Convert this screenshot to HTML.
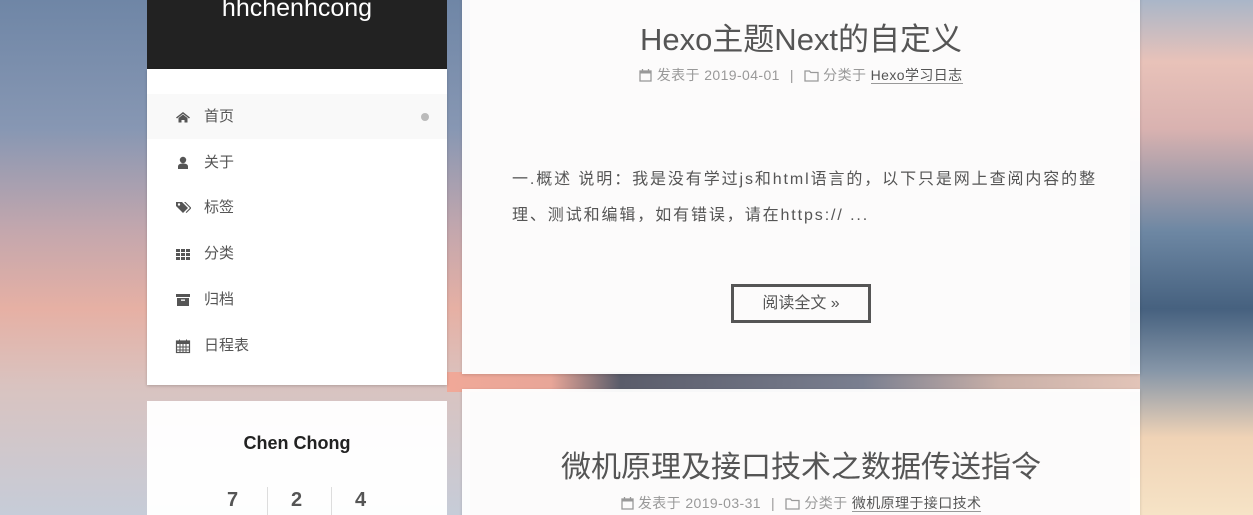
<!DOCTYPE html>
<html><head><meta charset="utf-8"><style>
*{margin:0;padding:0;box-sizing:border-box}
html,body{width:1253px;height:515px;overflow:hidden}
body{position:relative;font-family:"Liberation Sans","Noto Sans CJK SC",sans-serif;background:#b9a9b0}
.bgl{position:absolute;left:0;top:0;width:470px;height:515px;background:linear-gradient(180deg,#6f86a6 0%,#8797b3 25%,#c4a7ad 45%,#e6b0a4 60%,#d9c3c0 75%,#c6ccd8 100%)}
.bgr{position:absolute;left:1130px;top:0;width:123px;height:515px;background:linear-gradient(180deg,#a9b6c8 0%,#e8c2b9 12%,#d9b2b0 25%,#6d87a3 45%,#46617f 60%,#8696a8 72%,#f0d3b6 85%,#f6e3c6 100%)}
.bgm{position:absolute;left:447px;top:372px;width:693px;height:20px;background:linear-gradient(90deg,#f0a898 0%,#e8a698 15%,#5a5c6a 25%,#7a7f90 60%,#c9b0a8 80%,#e2c4b8 100%)}
.header{position:absolute;left:147px;top:0;width:300px;height:69px;background:#222;color:#fff;text-align:center;font-size:25px}
.menu{position:absolute;left:147px;top:69px;width:300px;height:316px;background:#fff;box-shadow:0 1px 3px rgba(0,0,0,.2)}
.item{position:absolute;left:0;width:300px;height:45px;font-size:15px;color:#555;line-height:45px}
.item .ic{position:absolute;left:28px;top:15px;width:16px;height:16px}
.item .t{position:absolute;left:57px}
.side2{position:absolute;left:147px;top:401px;width:300px;height:114px;background:rgba(255,255,255,.97)}
.card{position:absolute;left:462px;width:678px;background:rgba(255,255,255,.95);box-shadow:0 1px 3px rgba(0,0,0,.15);color:#555}
h1{font-weight:normal;font-size:31px;text-align:center;position:absolute;left:0;width:100%;color:#555}
.meta{position:absolute;left:0;width:100%;text-align:center;font-size:14px;color:#999;letter-spacing:.4px}
.meta a{color:#555;border-bottom:1px solid #999}
.meta svg{vertical-align:-2px}
.sep{margin:0 10px}
</style></head><body>
<div class="bgl"></div><div class="bgr"></div><div class="bgm"></div>
<div class="header"><div style="position:absolute;top:-6px;width:100%">hhchenhcong</div></div>
<div class="menu">
 <div class="item" style="top:25px;background:#f9f9f9"><svg class="ic" viewBox="0 0 16 16"><path d="M1 8.5L8 3l7 5.5-1 1-6-4.7-6 4.7z M3.5 9L8 5.5 12.5 9v4.5H9.5V11h-3v2.5H3.5z" fill="#555"/></svg><span class="t">首页</span><span style="position:absolute;left:274px;top:19px;width:8px;height:8px;border-radius:50%;background:#bbb"></span></div>
 <div class="item" style="top:71px"><svg class="ic" viewBox="0 0 16 16"><circle cx="8" cy="5" r="3.2" fill="#555"/><path d="M3 14v-2.5C3 9.5 5 8.5 8 8.5s5 1 5 3V14z" fill="#555"/></svg><span class="t">关于</span></div>
 <div class="item" style="top:116px"><svg class="ic" viewBox="0 0 16 16"><path d="M1 2h6l6 6-5 5-7-7z" fill="#555"/><circle cx="4" cy="4.5" r="1.2" fill="#fff"/><path d="M9 2h1.5l6 6-5 5-.8-.8 4.2-4.2z" fill="#555"/></svg><span class="t">标签</span></div>
 <div class="item" style="top:162px"><svg class="ic" viewBox="0 0 16 16" fill="#555"><rect x="1" y="3" width="4" height="3"/><rect x="6" y="3" width="4" height="3"/><rect x="11" y="3" width="4" height="3"/><rect x="1" y="7" width="4" height="3"/><rect x="6" y="7" width="4" height="3"/><rect x="11" y="7" width="4" height="3"/><rect x="1" y="11" width="4" height="3"/><rect x="6" y="11" width="4" height="3"/><rect x="11" y="11" width="4" height="3"/></svg><span class="t">分类</span></div>
 <div class="item" style="top:208px"><svg class="ic" viewBox="0 0 16 16" fill="#555"><rect x="1" y="2" width="14" height="3"/><path d="M2 6h12v8H2z"/><rect x="6" y="7.5" width="4" height="1.3" fill="#fff"/></svg><span class="t">归档</span></div>
 <div class="item" style="top:254px"><svg class="ic" viewBox="0 0 16 16"><rect x="1.5" y="3" width="13" height="11.5" fill="none" stroke="#555" stroke-width="1.2"/><rect x="1.5" y="3" width="13" height="3" fill="#555"/><path d="M4.5 1.5v3M11.5 1.5v3M5 6v8.5M8 6v8.5M11 6v8.5M1.5 9h13M1.5 12h13" stroke="#555" stroke-width="1"/></svg><span class="t">日程表</span></div>
</div>
<div class="side2">
 <div style="position:absolute;top:32px;width:100%;text-align:center;font-weight:bold;font-size:18px;color:#222">Chen Chong</div>
 <div style="position:absolute;top:88px;left:80px;font-size:20px;font-weight:bold;color:#555">7</div>
 <div style="position:absolute;top:86px;left:120px;width:1px;height:30px;background:#ddd"></div>
 <div style="position:absolute;top:88px;left:144px;font-size:20px;font-weight:bold;color:#555">2</div>
 <div style="position:absolute;top:86px;left:184px;width:1px;height:30px;background:#ddd"></div>
 <div style="position:absolute;top:88px;left:208px;font-size:20px;font-weight:bold;color:#555">4</div>
</div>
<div class="card" style="top:-10px;height:384px">
 <h1 style="top:24px">Hexo主题Next的自定义</h1>
 <div class="meta" style="top:75px"><svg width="13" height="14" viewBox="0 0 13 14"><rect x="1" y="3" width="11" height="10" fill="none" stroke="#999" stroke-width="1.3"/><rect x="1" y="3" width="11" height="2.5" fill="#999"/><path d="M3.5 1v3M9.5 1v3" stroke="#999" stroke-width="1.3"/></svg> 发表于 2019-04-01<span class="sep">|</span><svg width="15" height="13" viewBox="0 0 15 13"><path d="M1 2h4.5l1.3 1.5H14V12H1z" fill="none" stroke="#999" stroke-width="1.3"/></svg> 分类于 <a>Hexo学习日志</a></div>
 <div style="position:absolute;left:50px;top:172px;width:600px;font-size:16px;line-height:36px;color:#555;letter-spacing:1.9px;white-space:nowrap">一.概述 说明：我是没有学过js和html语言的，以下只是网上查阅内容的整<br>理、测试和编辑，如有错误，请在https:// ...</div>
 <div style="position:absolute;left:269px;top:294px;width:140px;height:39px;border:3px solid #555;text-align:center;font-size:16px;line-height:33px">阅读全文 »</div>
</div>
<div class="card" style="top:389px;height:140px">
 <h1 style="top:53px;font-size:30px">微机原理及接口技术之数据传送指令</h1>
 <div class="meta" style="top:104px"><svg width="13" height="14" viewBox="0 0 13 14"><rect x="1" y="3" width="11" height="10" fill="none" stroke="#999" stroke-width="1.3"/><rect x="1" y="3" width="11" height="2.5" fill="#999"/><path d="M3.5 1v3M9.5 1v3" stroke="#999" stroke-width="1.3"/></svg> 发表于 2019-03-31<span class="sep">|</span><svg width="15" height="13" viewBox="0 0 15 13"><path d="M1 2h4.5l1.3 1.5H14V12H1z" fill="none" stroke="#999" stroke-width="1.3"/></svg> 分类于 <a>微机原理于接口技术</a></div>
</div>
</body></html>
